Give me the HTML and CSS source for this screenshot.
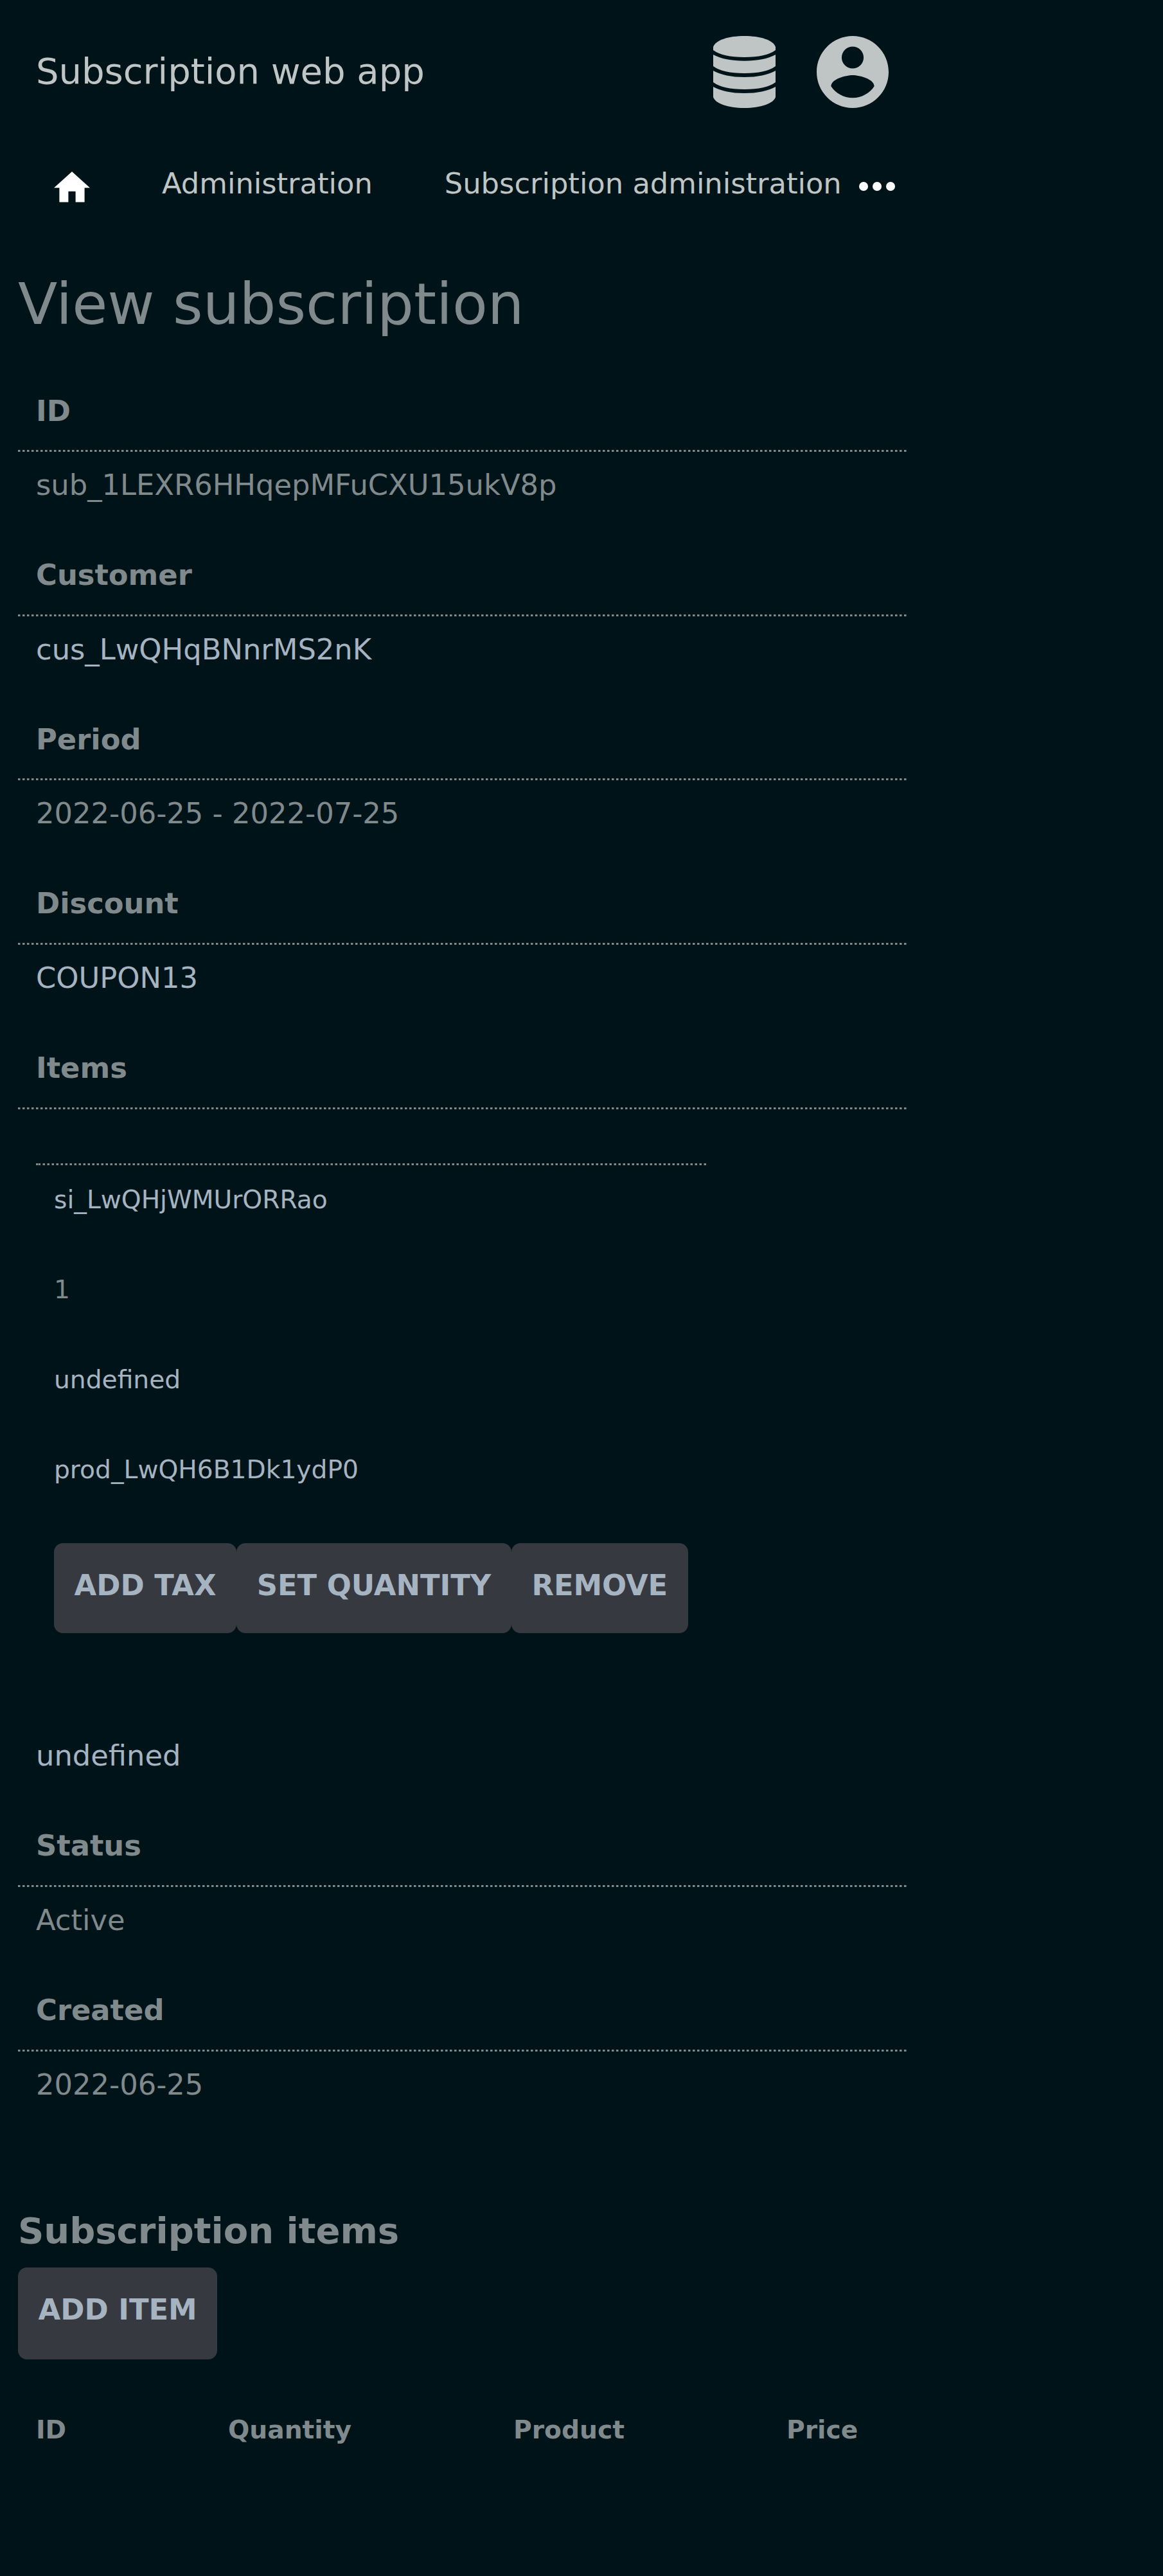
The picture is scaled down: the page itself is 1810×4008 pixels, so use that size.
FILE: index.html
```html
<!DOCTYPE html>
<html lang="en">
<head>
<meta charset="utf-8">
<title>Subscription web app</title>
<link rel="stylesheet" href="styles.css">
</head>
<body>
<div class="page">
  <header class="header">
    <a class="brand">Subscription web app</a>
    <div class="header-icons">
      <svg class="icon-db" viewBox="0 0 97 112"><path d="M0 17C4 6 24 0 48.500 0S93 6 97 17V22Q82 33 48.500 33T0 22Z"/><path d="M0 29Q18 38.700 48.500 38.700T97 29V47Q82 58 48.500 58T0 47Z"/><path d="M0 54Q18 64 48.500 64T97 54V72Q82 83 48.500 83T0 72Z"/><path d="M0 79Q18 89 48.500 89T97 79V95C94 105 74 112 48.500 112S3 105 0 95Z"/></svg>
      <svg class="icon-user" viewBox="2 2 20 20"><path d="M12 2C6.480 2 2 6.480 2 12s4.480 10 10 10 10-4.480 10-10S17.520 2 12 2zm0 2.930a3.050 3.050 0 1 1 0 6.100 3.050 3.050 0 0 1 0-6.100zm0 14.270c-2.500 0-4.710-1.280-6-3.220.03-1.990 4-3.080 6-3.080 1.990 0 5.970 1.090 6 3.080-1.290 1.940-3.500 3.220-6 3.220z"/></svg>
    </div>
  </header>
  <nav class="nav">
    <svg class="icon-home" viewBox="2 3 20 17"><path d="M10 20v-6h4v6h5v-8h3L12 3 2 12h3v8z"/></svg>
    <a class="nav-link">Administration</a>
    <a class="nav-link">Subscription administration</a>
    <svg class="icon-more" viewBox="0 0 56 14"><circle cx="7" cy="7" r="7"/><circle cx="28" cy="7" r="7"/><circle cx="49" cy="7" r="7"/></svg>
  </nav>
  <main>
    <h1>View subscription</h1>
    <dl class="details">
      <div><dt>ID</dt><dd>sub_1LEXR6HHqepMFuCXU15ukV8p</dd></div>
      <div><dt>Customer</dt><dd><a>cus_LwQHqBNnrMS2nK</a></dd></div>
      <div><dt>Period</dt><dd>2022-06-25 - 2022-07-25</dd></div>
      <div><dt>Discount</dt><dd><a>COUPON13</a></dd></div>
      <div class="items-row"><dt>Items</dt>
        <dd>
          <div class="item">
            <p><a>si_LwQHjWMUrORRao</a></p>
            <p>1</p>
            <p><a>undefined</a></p>
            <p><a>prod_LwQH6B1Dk1ydP0</a></p>
            <div class="actions"><button>Add tax</button><button>Set quantity</button><button>Remove</button></div>
          </div>
          <a class="after">undefined</a>
        </dd>
      </div>
      <div><dt>Status</dt><dd>Active</dd></div>
      <div><dt>Created</dt><dd>2022-06-25</dd></div>
    </dl>
    <h2>Subscription items</h2>
    <button class="add">Add item</button>
    <table class="list"><tr><th class="c1">ID</th><th class="c2">Quantity</th><th class="c3">Product</th><th>Price</th></tr></table>
  </main>
</div>
</body>
</html>
```
FILE: styles.css
```css
* { box-sizing: border-box; }
html { background: #001318; }
body { margin: 0; min-height: 4008px; background: #001318; color: #80898b; font: 44.8px "DejaVu Sans", sans-serif; }
.page { width: 1439px; padding: 0 28px; }
a { color: #a6b3c1; }
svg { display: block; fill: #bfc4c5; flex: none; }

.header { display: flex; justify-content: space-between; height: 204px; padding: 0 28px; }
.brand { font-size: 56px; line-height: 221px; color: #bfc4c5; white-space: nowrap; }
.header-icons { display: flex; gap: 64px; padding-top: 56px; }
.icon-db { width: 97px; height: 112px; }
.icon-user { width: 112px; height: 112px; }

.nav { display: flex; height: 163px; line-height: 163px; padding: 0 18px 0 56px; }
.nav svg { fill: #fff; }
.nav-link { margin-left: 112px; color: #bfc4c5; white-space: nowrap; }
.icon-home { width: 56px; height: 47.6px; margin-top: 63px; }
.icon-more { width: 56px; height: 14px; margin: 79px 0 0 auto; }

h1 { margin: 0; height: 211.7px; padding-top: 31px; font-size: 89.6px; line-height: 150px; font-weight: 400; }

.details { margin: 0; }
.details > div { height: 255.6px; }
.details > .items-row { height: 1210.3px; }
dt { height: 121.6px; padding-left: 28px; line-height: 121.6px; font-weight: 700; }
dd {
  display: flow-root;
  margin: 0;
  padding: 3px 28px 0;
  line-height: 104px;
  background: linear-gradient(90deg, #80898b 3px, #404e52 3px 4px, transparent 4px) 0 0 / 7px 3px repeat-x;
}
.item {
  width: 1043px;
  height: 870.2px;
  margin-top: 84.6px;
  padding: 3px 28px 0;
  font-size: 39.2px;
  background:
    linear-gradient(#80898b, #80898b) 0 0 / 3px 3px no-repeat,
    linear-gradient(90deg, #404e52 1px, #80898b 1px 4px, transparent 4px) 3px 0 / 7px 3px repeat-x;
}
.item p { margin: 0; height: 140px; line-height: 107px; }
.actions { display: flex; margin-top: 27.7px; }
button { height: 140px; padding: 0 31.6px 9px; border: 0; border-radius: 14px; background: #363940; color: #a6b3c1; font: 700 44.8px "DejaVu Sans", sans-serif; text-transform: uppercase; white-space: nowrap; }
.after { display: block; }

h2 { margin: 90.4px 0 0; font-size: 56px; line-height: 115px; font-weight: 700; }
.add { display: block; height: 143px; padding-bottom: 12px; }
.list { margin-top: 56px; border-collapse: collapse; font-size: 39.2px; }
th { height: 107px; padding: 0 28px; text-align: left; line-height: 107px; }
.c1 { width: 299px; }
.c2 { width: 444px; }
.c3 { width: 425px; }
```
